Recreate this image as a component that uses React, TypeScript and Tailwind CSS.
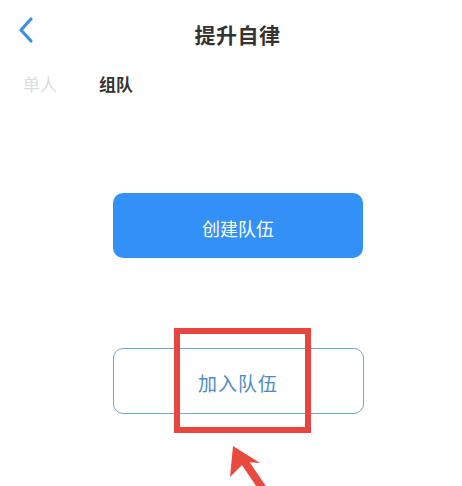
import React from 'react';

const cjk = { fontFamily: '"Noto Sans CJK SC", "Noto Sans", sans-serif' };

const BackIcon: React.FC = () => (
  <svg width="18" height="28" viewBox="0 0 18 28" fill="none">
    <path d="M14 3 L4 14 L14 25" stroke="#3d8fe0" strokeWidth="3.2" strokeLinecap="round" strokeLinejoin="round" />
  </svg>
);

const App: React.FC = () => {
  return (
    <div className="relative w-[462px] h-[486px] bg-white overflow-hidden" style={cjk}>
      {/* top bar */}
      <header className="relative h-[70px] flex items-center justify-center pl-[13px]">
        <button className="absolute left-[17px] top-[16px]">
          <BackIcon />
        </button>
        <h1 className="text-[21px] font-bold text-[#333] tracking-[0.5px]">提升自律</h1>
      </header>

      {/* mode tabs */}
      <nav className="flex items-center h-[28px] pl-[23px] gap-[42px] text-[17px]">
        <span className="text-[#dcdcdc]">单人</span>
        <span className="font-bold text-[#333]">组队</span>
      </nav>

      {/* actions */}
      <div className="flex flex-col items-center pt-[95px] pl-[14px]">
        <button className="w-[250px] h-[65px] rounded-[10px] bg-[#3390f6] text-white text-[18px] flex items-center justify-center pt-[6px]">
          创建队伍
        </button>
        <button className="mt-[90px] w-[251px] h-[66px] rounded-[10px] border-[1.5px] border-[#74a6cf] text-[#4a8bc7] text-[19px] flex items-center justify-center pt-[4px] tracking-[1px]">
          加入队伍
        </button>
      </div>

      {/* highlight annotation */}
      <div className="absolute left-[174px] top-[328px] w-[137px] h-[105px] border-[6px] border-[#e8453e]" />
      <svg className="absolute left-0 top-0" width="462" height="486" viewBox="0 0 462 486">
        <path d="M265 492 L240 455" stroke="#e84a40" strokeWidth="8" strokeLinecap="butt" />
        <path d="M233 446 L260 463 L245 462 L230 477 Z" fill="#e84a40" />
      </svg>
    </div>
  );
};

export default App;
